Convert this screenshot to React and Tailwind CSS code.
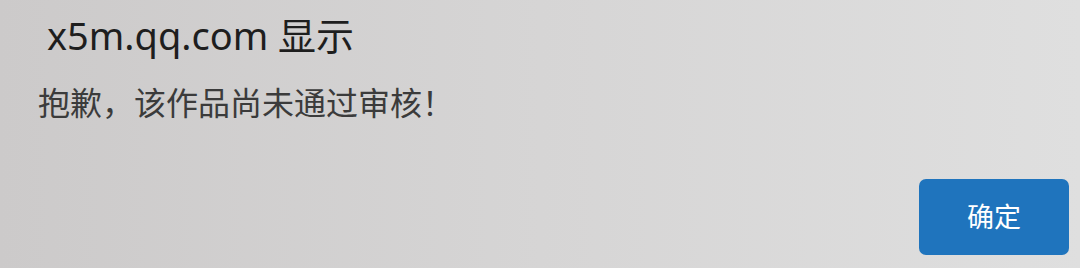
import React from 'react';

export default function App() {
    return (
        <div
            className="w-[1080px] h-[268px] bg-gradient-to-r from-[#cccaca] via-[#d6d5d5] to-[#dfdfdf] flex flex-col overflow-hidden"
            style={{ fontFamily: '"Noto Sans", "Noto Sans CJK SC", sans-serif' }}
        >
            <div className="pl-[38px] pt-[9px]">
                <div className="ml-[9px] text-[38px] leading-[52px] text-[#1e1e1e]">x5m.qq.com 显示</div>
                <div className="mt-[22px] text-[32px] leading-[40px] text-[#3b3b3b]">抱歉，该作品尚未通过审核！</div>
            </div>

            <div className="flex-1 flex items-end justify-end pr-[11px] pb-[13px]">
                <button className="w-[150px] h-[76px] rounded-[7px] bg-[#1f74bd] text-white text-[27px] flex items-center justify-center">
                    确定
                </button>
            </div>
        </div>
    );
}
